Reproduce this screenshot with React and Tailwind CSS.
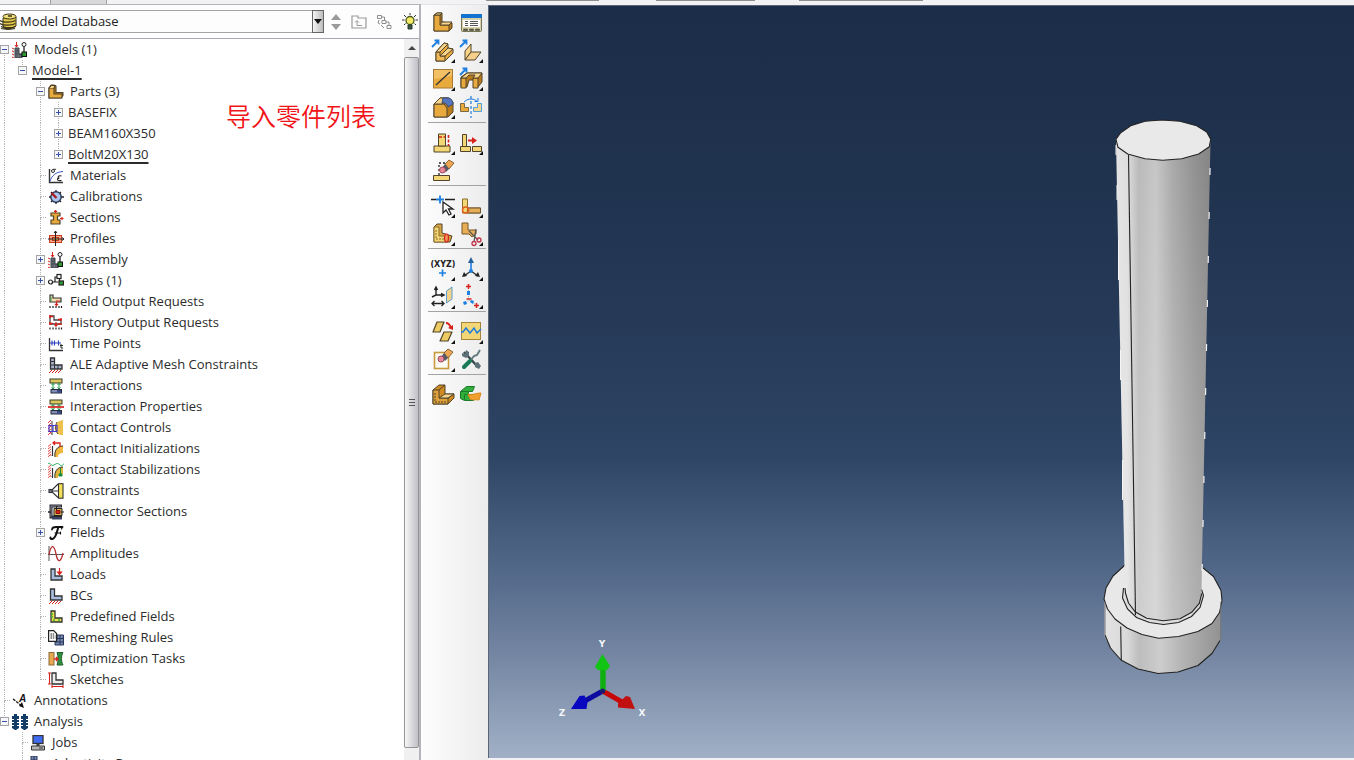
import React from "react";

const O = "#e9aa3d";
const OL = "#f8d48b";
const OD = "#b97a1c";
const K = "#51442a";
const Y = "#f3d777";
const B = "#1d7fe0";
const R = "#d8231d";

/* ---------- tree icons, 16 x 16 ---------- */

const L = "M3 2h4v7h7v4H3z";

const assembly = (
  <g>
    <path d="M4.500 0v5M3 3l1.500 2L6 3" fill="none" stroke={R} />
    <path d="M3 6h4v6h3v4H3z" fill="#6f7780" stroke="#3c4248" />
    <path d="M5 6v10M3 9h4M3 12h7M8 12v4" stroke="#3c4248" strokeWidth=".7" />
    <path d="M0 6l2 1M0 9l2 1M0 12l2 1M0 15l2 1" stroke={R} />
    <circle cx="12" cy="2.500" r="2" fill="#fff" stroke="#222" />
    <path d="M12 5v5" stroke="#222" strokeWidth="1.300" />
    <rect x="10" y="10" width="4.500" height="4.500" fill="#2f9a2f" stroke="#111" />
  </g>
);

const interaction = (
  <g>
    <rect x="2" y="1" width="12" height="4" fill="#d9c862" stroke="#3b3820" />
    <path d="M5 5v6M11 5v6M3.500 7L5 5.500 6.500 7M9.500 7L11 5.500 12.500 7M3.500 9.500L5 11l1.500-1.500M9.500 9.500L11 11l1.500-1.500" stroke="#1f9a4b" fill="none" />
    <rect x="3" y="11.500" width="10.500" height="3.500" fill="#7d8bb5" stroke="#262b3a" />
    <path d="M9 12h4v3H9z" fill="#3c4a86" />
  </g>
);

const wall = <path d="M0 3l3-3M0 6l3-3M0 9l3-3M0 12l3-3M0 15l3-3M3 14v-1" stroke={R} strokeWidth=".9" />;

const icons = {
  assembly,
  parts: (
    <g stroke={K} strokeWidth="1.100" strokeLinejoin="round">
      <path d="M1 4v10h12l2-2.500V8.500H8V2L6 1H3z" fill={OD} />
      <path d="M1 4h5v6h8v4H1z" fill={O} />
      <path d="M1 4l2-2.500h4L6 4" fill={OL} />
    </g>
  ),
  materials: (
    <g fill="none">
      <path d="M1.500 1v13.500H15" stroke="#333" strokeWidth="1.400" />
      <path d="M2 13C4 8 7 4 15 3.500" stroke="#3558c8" />
      <circle cx="5" cy="3" r="1.500" stroke="#333" />
      <path d="M5 1.300h3" stroke="#333" />
      <path d="M13.500 8c-4-1-4 2-2 2-3 0-3 3.500 2 2.500" stroke="#222" strokeWidth="1.200" />
    </g>
  ),
  calibrations: (
    <g stroke="#222">
      <path d="M8 1v2M8 13v2M1 8h2M13 8h3M3 3l1.500 1.500M13 3l-1.500 1.500M3 13l1.500-1.500M13 13l-1.500-1.500" strokeWidth="1.300" />
      <circle cx="8" cy="8" r="5.200" fill="#a9c4ee" stroke="#27364f" strokeWidth="1.400" />
      <path d="M3.500 4l5 5" stroke="#b01818" strokeWidth="2.300" />
    </g>
  ),
  sections: (
    <g>
      <path d="M3 3h9v3H9.500v4H12v4H3v-4h2.500V6H3z" fill={O} stroke={K} strokeWidth="1.200" />
      <path d="M7.500 0v3M6 1.300h3M12 8.500h3.500M14 7v3" stroke={R} strokeWidth="1.200" />
    </g>
  ),
  profiles: (
    <g>
      <rect x="1.500" y="4.500" width="12" height="7" fill="#f7a888" stroke="#d04020" />
      <rect x="4.500" y="6.500" width="6" height="3" fill="#f8c060" stroke="#c03818" />
      <path d="M7.500 0v15M0 8h16M6 2l1.500-2L9 2M14 6.500L16 8l-2 1.500" fill="none" stroke="#222" />
    </g>
  ),
  steps: (
    <g stroke="#222" strokeWidth="1.200" fill="none">
      <circle cx="2.500" cy="9" r="2" />
      <path d="M5 9h5M7 9V4h2" />
      <rect x="9" y="1.500" width="4" height="4" fill="#fff" />
      <path d="M11.500 5.500V8" />
      <rect x="11" y="8" width="4.500" height="4" fill="#2f9a2f" />
    </g>
  ),
  field: (
    <g>
      <path d="M2 1h3v3h8v4H2z" fill="#f4dcae" stroke="#333" strokeWidth="1.200" />
      <path d="M3 3v4" stroke="#2da84a" />
      <path d="M8 7h4M8.500 8v3M7 10l1.500 1.500L10 10" stroke={R} fill="none" strokeWidth="1.200" />
      <path d="M2 12v3M5 12v3M8 12v3M11 12v3M13.500 12v3" stroke="#222" strokeDasharray="2 1" strokeWidth="1.200" />
    </g>
  ),
  history: (
    <g>
      <path d="M2 1h4v4h7v4H2z" fill="#fff" stroke="#444" strokeWidth="1.300" />
      <path d="M1 1.500h4M1 8.500h4M10 4.500h4M10 9h4M2 0v3M2 7v3M13 3v3M8 7v4M6.500 9.500L8 11l1.500-1.500" stroke={R} fill="none" strokeWidth="1.300" />
      <path d="M2 12.500v3M5 12.500v3M8 12.500v3M11 12.500v3M13.500 12.500v3" stroke="#222" strokeDasharray="2 1" strokeWidth="1.200" />
    </g>
  ),
  time: (
    <g fill="none">
      <path d="M1.500 2v12.500H15" stroke="#333" strokeWidth="1.300" />
      <path d="M2 7h11M4 4.500v5M6.500 4.500v5M10.500 4.500v5" stroke="#2c3fbf" strokeWidth="1.100" />
      <path d="M13 8v4h2M12 9.500h3" stroke="#222" />
    </g>
  ),
  ale: (
    <g>
      <path d="M2.500 1h4v7H14v4H2.500z" fill="#a9b4cc" stroke="#333" strokeWidth="1.300" />
      <path d="M2.500 4.500h4M6.500 8v4M2.500 8h4M10 8v4" stroke="#333" />
      <path d="M1 16l3-3M4 16l3-3M7 16l3-3M10 16l3-3" stroke={R} />
    </g>
  ),
  interaction,
  interactionProps: (
    <g>
      {interaction}
      <path d="M0 8h16" stroke={R} strokeWidth="1.700" />
    </g>
  ),
  contactControls: (
    <g>
      {wall}
      <path d="M4 1v14" stroke="#333" />
      <path d="M15 0c-6 1-9 5-8 9s3 6 8 6z" fill="#eec04c" />
      <path d="M9 2c-2 4-2 8 1 12" stroke={K} fill="none" />
      <path d="M1 5.500h8v6H1zM5 5v7" fill="none" stroke="#4338d0" strokeWidth="1.200" />
    </g>
  ),
  contactInit: (
    <g>
      <g transform="translate(0 3) scale(1 .85)">{wall}</g>
      <path d="M4.500 5v10" stroke="#333" strokeWidth="1.200" />
      <path d="M15 5c-6 0-9 5-8 11h3c0-3 2-4 5-4z" fill="#eeb83c" />
      <path d="M15 5c-6 0-9 5-8 11" stroke="#333" fill="none" />
      <path d="M12 6V2H5M7 0L5 2l2 2" stroke={R} fill="none" strokeWidth="1.300" />
    </g>
  ),
  contactStab: (
    <g>
      <g transform="translate(0 3) scale(1 .85)">{wall}</g>
      <path d="M4.500 6v10" stroke="#333" strokeWidth="1.200" />
      <path d="M15 5c-6 0-9 5-8 11h3c0-3 2-4 5-4z" fill="#e0b43c" />
      <path d="M15 5c-6 0-9 5-8 11" stroke="#333" fill="none" />
      <path d="M0 2c2-3 3 3 6 1s4-2 6 0 3-1 4-1" stroke="#1fae5c" fill="none" />
      <path d="M12.500 6v8M11 12h3v2h-3z" stroke="#178a3c" fill="#178a3c" />
    </g>
  ),
  constraints: (
    <g stroke="#333" strokeWidth="1.100">
      <rect x="10.500" y=".700" width="4.500" height="14.500" fill="#f2df58" />
      <path d="M10 1L3 8l7 6.500M3 8h7" fill="none" />
      <rect x="1" y="6.500" width="3" height="3" fill="#6f7d9a" />
    </g>
  ),
  connector: (
    <g>
      <path d="M14 2H3v11h11" fill="none" stroke="#2a2a32" strokeWidth="3" />
      <path d="M13 2H3v11" fill="none" stroke="#8a8a96" />
      <path d="M0 8h3" stroke="#222" strokeWidth="1.500" />
      <path d="M6 4.500h8v7H6z" fill="#d9b452" stroke="#222" />
      <path d="M8 6.500h4v3H8z" fill={R} stroke="#8a1010" />
      <path d="M13 8h3M8.500 2v4" stroke="#222" />
      <path d="M4 13h10v2.500H4z" fill="#3a4060" />
    </g>
  ),
  amplitudes: (
    <g fill="none">
      <path d="M1 0v15M0 8.500h16" stroke="#555" />
      <path d="M1 9C3-2 6-2 8 8s5 8 7-1" stroke="#b33030" strokeWidth="1.300" />
    </g>
  ),
  loads: (
    <g>
      <path d={L} fill="#a8bde0" stroke="#333" strokeWidth="1.300" />
      <path d="M11.500 1v6M9.500 5l2 2.500 2-2.500z" stroke={R} fill={R} strokeWidth="1.200" />
    </g>
  ),
  bcs: (
    <g>
      <path d="M2.500 1h4v7H14v4H2.500z" fill="#a8bde0" stroke="#333" strokeWidth="1.300" />
      <path d="M1 16l3-3M4 16l3-3M7 16l3-3M10 16l3-3" stroke={R} />
    </g>
  ),
  predefined: (
    <g>
      <path d={L} fill="#e8e04c" stroke="#333" strokeWidth="1.300" />
      <path d="M4 4v5M5 11h2M10 11h2" stroke="#3fb03f" strokeWidth="1.500" strokeDasharray="2 1" />
    </g>
  ),
  remeshing: (
    <g>
      <path d="M9 5h6.500v10H7v-5h2z" fill="#7388b4" stroke="#2a3554" />
      <path d="M12 5v10M9 8.500h6M7 12h8" stroke="#2a3554" />
      <path d="M.6.600h5l3 3v7.800h-8z" fill="#fff" stroke="#222" strokeWidth="1.200" />
      <path d="M2.500 4h4M2.500 6h5M2.500 8h5" stroke="#222" strokeDasharray="1.500 .7" />
    </g>
  ),
  optimization: (
    <g>
      <rect x="1" y="1.500" width="5" height="12.500" fill="#e8a850" stroke="#8a6a3a" />
      <path d="M9 1.500h6c-2 3-2 9 0 12.500H9c1.500-4 1.500-8 0-12.500z" fill="#2f8f3f" stroke="#1f5f2a" />
      <path d="M6 8h3.500M8 6l2 2-2 2" stroke={R} fill="none" strokeWidth="1.300" />
    </g>
  ),
  sketches: (
    <g>
      <path d="M4 1h4v7h7v4H4z" fill="#eee" stroke="#333" strokeWidth="1.300" />
      <path d="M1.500 1v11M0 1h3M0 12h3M4 14.500h11M4 13v3M15 13v3" stroke={R} strokeWidth="1.100" />
    </g>
  ),
  fields: (
    <g fill="none" stroke="#111" strokeLinecap="round">
      <path d="M4 4.500C4 2 6 2 8 2h6.500" strokeWidth="1.800" />
      <path d="M10.500 2C9 5 8.500 13 4.500 14c-1.500.4-2.500-.5-2-1.500" strokeWidth="2" />
      <path d="M7 8h5M12.500 7v2M14.500 2l-1 2" strokeWidth="1.200" />
    </g>
  ),
  annotations: (
    <g>
      <path d="M1 6l9 7" stroke="#111" strokeWidth="1.300" strokeDasharray="3 1" />
      <path d="M12 15l-5-2 3-4z" fill="#111" />
      <text x="7" y="9" fontSize="10" fontWeight="bold" fontStyle="italic" fontFamily="Liberation Sans, sans-serif" fill="#111">A</text>
    </g>
  ),
  analysis: (
    <g fill="#123c66">
      {[0, 9].map((x) => (
        <path key={x} transform={`translate(${x} 0)`} d="M2 0h3v2h2v3H5v1h2v2H5v1h2v2H5v1h2v2L4 16H3l-3-2v-2h2v-1H0V9h2V8H0V6h2V5H0V2h2z" />
      ))}
    </g>
  ),
  jobs: (
    <g stroke="#333">
      <rect x="3" y="0.500" width="10" height="8" fill="#3f6cf0" strokeWidth="1.300" />
      <path d="M7 9h2v2H7z" fill="#666" />
      <path d="M1.500 11h13v4h-13z" fill="#b8b8b8" />
      <path d="M9 13h4" />
    </g>
  ),
  adaptivity: (
    <g stroke="#2a3554">
      <path d="M1 0h6v10H1z" fill="#7388b4" />
      <path d="M4 0v10M1 4h6" />
    </g>
  ),
};

/* ---------- tree data ---------- */

const tree = [
  {
    label: "Models (1)", icon: "assembly", open: true, children: [
      {
        label: "Model-1", open: true, marked: true, children: [
          {
            label: "Parts (3)", icon: "parts", open: true, children: [
              { label: "BASEFIX", open: false },
              { label: "BEAM160X350", open: false },
              { label: "BoltM20X130", open: false, marked: true },
            ],
          },
          { label: "Materials", icon: "materials" },
          { label: "Calibrations", icon: "calibrations" },
          { label: "Sections", icon: "sections" },
          { label: "Profiles", icon: "profiles" },
          { label: "Assembly", icon: "assembly", open: false },
          { label: "Steps (1)", icon: "steps", open: false },
          { label: "Field Output Requests", icon: "field" },
          { label: "History Output Requests", icon: "history" },
          { label: "Time Points", icon: "time" },
          { label: "ALE Adaptive Mesh Constraints", icon: "ale" },
          { label: "Interactions", icon: "interaction" },
          { label: "Interaction Properties", icon: "interactionProps" },
          { label: "Contact Controls", icon: "contactControls" },
          { label: "Contact Initializations", icon: "contactInit" },
          { label: "Contact Stabilizations", icon: "contactStab" },
          { label: "Constraints", icon: "constraints" },
          { label: "Connector Sections", icon: "connector" },
          { label: "Fields", icon: "fields", open: false },
          { label: "Amplitudes", icon: "amplitudes" },
          { label: "Loads", icon: "loads" },
          { label: "BCs", icon: "bcs" },
          { label: "Predefined Fields", icon: "predefined" },
          { label: "Remeshing Rules", icon: "remeshing" },
          { label: "Optimization Tasks", icon: "optimization" },
          { label: "Sketches", icon: "sketches" },
        ],
      },
    ],
  },
  { label: "Annotations", icon: "annotations" },
  {
    label: "Analysis", icon: "analysis", open: true, children: [
      { label: "Jobs", icon: "jobs" },
      { label: "Adaptivity Processes", icon: "adaptivity" },
    ],
  },
];

function TreeNode({ node, guides, first, last }) {
  const expandable = node.open !== undefined;
  return (
    <li role="treeitem" aria-expanded={expandable ? node.open : undefined}>
      <div className="flex h-[21px] items-center whitespace-nowrap">
        {guides.map((on, i) => (
          <span key={i} className="h-full w-[18px] shrink-0 pl-1">
            {on && <span className="block h-full border-l border-dotted border-[#b4b4b4]" />}
          </span>
        ))}
        <span className="relative flex h-full w-[9px] shrink-0 flex-col pl-1">
          <span className={first ? "flex-1" : "flex-1 border-l border-dotted border-[#b4b4b4]"} />
          <span className={last ? "flex-1" : "flex-1 border-l border-dotted border-[#b4b4b4]"} />
          {expandable ? (
            <button
              type="button"
              aria-label={`${node.open ? "Collapse" : "Expand"} ${node.label}`}
              className="absolute left-0 top-[6px] flex size-[9px] items-center justify-center border border-[#a4a4a4] bg-[#f6f7fa]"
            >
              <svg viewBox="0 0 7 7" className="size-[7px]" stroke="#3a4fa8">
                <path d={node.open ? "M1 3.500h5" : "M1 3.500h5M3.500 1v5"} />
              </svg>
            </button>
          ) : (
            <span className="absolute left-1 top-[10px] w-[6px] border-t border-dotted border-[#b4b4b4]" />
          )}
        </span>
        {node.icon && (
          <svg viewBox="0 0 16 16" className="ml-[3px] mr-px size-4 shrink-0" aria-hidden="true">
            {icons[node.icon]}
          </svg>
        )}
        <span className={node.marked ? "ml-[5px] underline decoration-2 underline-offset-[3px]" : "ml-[5px]"}>{node.label}</span>
      </div>
      {node.children && (
        <ul role="group">
          {node.children.map((c, i) => (
            <TreeNode key={c.label} node={c} guides={[...guides, !last]} last={i === node.children.length - 1} />
          ))}
        </ul>
      )}
    </li>
  );
}

/* ---------- toolbar icons, 28 x 28 ---------- */

const more = <path d="M26 22v4h-4z" fill="#111" />;
const arrowUp = <path d="M3 10l6-6M5.500 3.500H9.500V7.500" stroke={B} strokeWidth="1.800" fill="none" />;

const groups = [
  [
    ["Create Part", false, (
      <g stroke={K} strokeLinejoin="round">
        <path d="M5 6l3-2h5v9l10 1v5l-3 3H5z" fill={OD} />
        <path d="M5 6h6v10h9v6H5z" fill={O} />
        <path d="M5 6l3-2h5l-2 2zM11 16l2-3h10l-3 3z" fill={OL} />
      </g>
    )],
    ["Part Manager", false, (
      <g>
        <rect x="4.500" y="5.500" width="20" height="17" rx="1" fill="#d8d2ac" stroke="#77745c" />
        <path d="M4 5h21v4H4z" fill="#1173cf" />
        <path d="M6 11h17v7H6z" fill="#fff" />
        <path d="M8 12.500h3M8 14.500h3M8 16.500h3M13 12.500h8M13 14.500h8M13 16.500h8" stroke="#555" />
        <path d="M6.500 20h4v1.500h-4zM12.500 20h4v1.500h-4zM18.500 20h4v1.500h-4z" fill="#55523c" stroke="#55523c" strokeWidth=".6" />
      </g>
    )],
    ["Create Solid: Extrude", true, (
      <g>
        <g stroke={K} strokeLinejoin="round">
          <path d="M7 15l8-9 4 1v4l5 1v4l-8 8H7z" fill={O} />
          <path d="M7 15h4v4h5v5H7z" fill="#f0b854" />
          <path d="M7 15l8-9 4 1-8 8z" fill={OL} />
          <path d="M11 19l8-8 5 1-8 7z" fill={OL} />
        </g>
        {arrowUp}
      </g>
    )],
    ["Create Shell: Extrude", true, (
      <g>
        <path d="M8 14l6-7v8l-6 8z" fill={OL} stroke={K} />
        <path d="M14 15h10l-6 8H8z" fill="#f7cf8d" stroke={K} />
        {arrowUp}
      </g>
    )],
    ["Create Wire", true, (
      <g>
        <rect x="4.500" y="4.500" width="19" height="18.500" fill={O} stroke="#a57a34" />
        <path d="M5 5h18v6L5 14z" fill="#f4c066" />
        <path d="M7 20L21 7" stroke="#333" strokeWidth="1.300" />
      </g>
    )],
    ["Create Cut: Extrude", true, (
      <g>
        <g stroke={K} strokeLinejoin="round">
          <path d="M4 12l6-4h15v9l-4 5h-4v-7h-5l-2 7H4z" fill={OD} />
          <path d="M4 13h5v10H4zM16 13h5v10h-5z" fill={O} />
          <path d="M4 13l6-5h15l-4 5h-5l2-3h-6l-3 3z" fill={OL} />
        </g>
        {arrowUp}
      </g>
    )],
    ["Create Round or Fillet", true, (
      <g strokeLinejoin="round">
        <path d="M5 11l6-6h9l4 4v10l-5 5H5z" fill={OD} stroke={K} />
        <path d="M5 11h10l3 4v9H5z" fill={O} stroke={K} />
        <path d="M5 11l6-6h8l-6 6z" fill={OL} stroke={K} />
        <path d="M14 5h6c3 1 4 4 4 6l-5 3c0-2-3-5-6-4z" fill="#5577c0" stroke="#3d4c74" />
      </g>
    )],
    ["Create Mirror", false, (
      <g>
        <path d="M3.500 10.500h4v4h4v4h-8z" fill={O} stroke="#7a6a44" />
        <path d="M24.500 10.500h-4v4h-4v4h8z" fill={OL} stroke="#4fa0dc" />
        <path d="M14 3v22" stroke={B} strokeDasharray="3 2" strokeWidth="1.200" />
        <path d="M7 9c4-4 10-4 14 0M17.500 8.500h3.500V5" fill="none" stroke={B} />
      </g>
    )],
  ],
  [
    ["Partition Edge", true, (
      <g>
        <path d="M5 17h16v6H5z" fill={Y} stroke={K} />
        <path d="M9.500 5h7v12h-7z" fill={Y} stroke={K} />
        <path d="M10 8h6M19.500 6v11" stroke={R} strokeWidth="1.600" strokeDasharray="3 1.500" />
      </g>
    )],
    ["Partition Face", true, (
      <g>
        <path d="M3.500 17.500h10v5h-10zM15.500 17.500h9v5h-9zM5.500 5.500h4v12h-4z" fill={Y} stroke={K} />
        <path d="M11 11.500h6" stroke={R} strokeWidth="2" />
        <path d="M15 8l5 3.500-5 3.500z" fill={R} />
      </g>
    )],
    ["Remove Feature", false, (
      <g>
        <path d="M4.500 18.500h16v5h-16z" fill={Y} stroke={K} />
        <path d="M10 18V6h7" fill="none" stroke="#222" strokeWidth="1.300" strokeDasharray="2 2" />
        <path d="M16 7l4-4 5 3-5 6z" fill="#efa653" stroke="#8a6434" />
        <path d="M13 11l3-4 4 5-3 3z" fill="#555a66" />
        <circle cx="13.500" cy="13" r="3" fill="#e88a9c" stroke="#9a4a5c" />
      </g>
    )],
  ],
  [
    ["Partition Edge: Enter Parameter", true, (
      <g>
        <path d="M2 7.500h5M16 7.500h10" stroke="#222" strokeWidth="1.300" />
        <path d="M7 7.500h8M11 3.500v8" stroke={B} strokeWidth="1.800" />
        <path d="M14 10v11l3-3 3 5 2-1-2.500-5H24z" fill="#fff" stroke="#222" strokeWidth="1.300" />
      </g>
    )],
    ["Partition Face: Sketch", true, (
      <g>
        <path d="M5.500 7h5v9h13v5h-18z" fill={Y} stroke="#8a6c2c" />
        <path d="M11 16h12.500v5H10z" fill="#e6ad55" stroke="#6b5430" />
        <circle cx="8.500" cy="18" r="3" fill="none" stroke="#e2601c" strokeWidth="1.500" />
      </g>
    )],
    ["Partition Cell", true, (
      <g>
        <path d="M5 7l3-3h5v9l10 3-2 6H5z" fill="#d6a744" stroke={K} />
        <path d="M5 7h5v9h8v6H5z" fill={Y} stroke="#8c6c2c" />
        <ellipse cx="17.500" cy="18" rx="2" ry="4" fill="#ee9257" stroke={R} strokeWidth="1.200" />
        <path d="M7 10v9h8" fill="none" stroke="#8c6c2c" strokeDasharray="2 1" />
      </g>
    )],
    ["Partition Cell: Cut", true, (
      <g>
        <path d="M5 3h6v7h8v4l-4 3-3-3H5z" fill="#e6ad55" stroke="#77572a" />
        <path d="M12 11l9 9M19 9l-2 13" stroke="#555" strokeWidth="1.300" />
        <circle cx="22" cy="20" r="2" fill="none" stroke="#c0314a" strokeWidth="1.300" />
        <circle cx="17" cy="23.500" r="2" fill="none" stroke="#c0314a" strokeWidth="1.300" />
      </g>
    )],
  ],
  [
    ["Create Datum Point", true, (
      <g>
        <text x="14" y="12" textAnchor="middle" fontSize="8" fontWeight="bold" fontFamily="DejaVu Sans, sans-serif" fill="#222">(XYZ)</text>
        <path d="M10 18h7M13.500 14.500v7" stroke={B} strokeWidth="1.700" />
      </g>
    )],
    ["Create Datum Axis", true, (
      <g>
        <path d="M14 4v13" stroke={B} strokeWidth="1.600" />
        <path d="M14 2l3 6h-6z" fill="#245f9e" />
        <path d="M14 16l-7 5M14 16l7 5" stroke="#333" strokeWidth="1.500" />
        <path d="M5 22l2-5 3 4zM23 22l-2-5-3 4z" fill="#222" />
        <circle cx="14" cy="16" r="2" fill={B} />
      </g>
    )],
    ["Create Datum Plane", true, (
      <g>
        <path d="M7 5v7l-4 2M7 12h7M5.500 7L7 4l1.500 3M12 10.500l3 1.500-3 1.500" fill="none" stroke="#222" strokeWidth="1.400" />
        <path d="M3 20.500h12M5.500 18L3 20.500 5.500 23M12.500 18l2.500 2.500-2.500 2.500" fill="none" stroke="#222" strokeWidth="1.300" />
        <path d="M17.500 8L23 4v12l-5.500 4z" fill="#f3d38b" stroke="#5a9dd2" />
      </g>
    )],
    ["Create Datum Csys", true, (
      <g>
        <path d="M11.500 17l-4 4M11.500 17l8 5M11.500 4v12" stroke="#9bb" strokeDasharray="1.500 1.500" />
        <path d="M9 3.500h5M11.500 1v5M17 22.500h5M19.500 20v5M9.500 16h5" stroke={R} strokeWidth="1.500" />
        <path d="M10 8h3v4h-3zM6 19l3-1 1 3-3 1zM14 17l3 1-1 3-3-2z" fill={B} />
      </g>
    )],
  ],
  [
    ["Edit Geometry", true, (
      <g strokeLinejoin="round">
        <path d="M8 4h7l-4 10H4zM15 14h8l-4 9h-8z" fill="#eccb62" stroke={K} strokeWidth="1.200" />
        <path d="M17 5c3 0 4 2 5 5" stroke={R} fill="none" strokeWidth="2" />
        <path d="M24 7v5l-5-2z" fill={R} />
      </g>
    )],
    ["Repair Small Faces", true, (
      <g>
        <rect x="4.500" y="4.500" width="19" height="17" fill={Y} stroke="#a8843a" />
        <path d="M4 14h2l3-4 4 5 4-5 3 5 4-4" fill="none" stroke={B} strokeWidth="1.500" />
      </g>
    )],
    ["Delete Faces", true, (
      <g>
        <rect x="5.500" y="6.500" width="14" height="16" fill="#fcfcf4" stroke="#c79a3c" strokeWidth="1.600" />
        <path d="M15 7l4-4 5 3-5 6z" fill="#efa653" stroke="#8a6434" />
        <path d="M12 11l3-4 4 5-3 3z" fill="#555a66" />
        <circle cx="12" cy="13" r="3" fill="#e88a9c" stroke="#9a4a5c" />
      </g>
    )],
    ["Geometry Tools", false, (
      <g>
        <path d="M7 6l14 15" stroke="#3a4a50" strokeWidth="2.500" />
        <path d="M5 7l3 1 1-4 3 2v4l-3 2-4-2zM18 17l3-1 3 4-2 3-4-2z" fill="#5d7178" />
        <path d="M23 4l-3 5-3 1-4 5" stroke="#657a80" strokeWidth="2" fill="none" />
        <path d="M13 15l-6 6" stroke="#187a56" strokeWidth="4" strokeLinecap="round" />
      </g>
    )],
  ],
  [
    ["Part Display", false, (
      <g stroke={K} strokeLinejoin="round">
        <path d="M4 9l6-5h6v9h9v4l-6 6H4z" fill="#d08a22" />
        <path d="M4 9h6v8h9v6H4z" fill="#e0a03a" />
        <path d="M10 9l6-5M19 17l6-4" fill="none" />
        <path d="M10 17l6-4h9l-6 4z" fill={OL} />
        <path d="M6 12v9h11" fill="none" strokeDasharray="2 1" />
      </g>
    )],
    ["Mesh Display", false, (
      <g strokeLinejoin="round">
        <path d="M3.500 10.500l6-5h8l-2 5h-4v3h5v6h-9l-4-2z" fill="#2fae3c" stroke="#1b7a28" />
        <path d="M4 10.500h7M7.500 13.500h4M7.500 14v5" stroke="#1b7a28" fill="none" />
        <path d="M11 13c4 2 6-1 13-1l-2 7c-4-1-6 1-9-1z" fill="#f0a02c" stroke="#d88a1c" />
      </g>
    )],
  ],
];

function Toolbar() {
  return (
    <div role="toolbar" aria-label="Part toolbox" className="flex w-[67px] shrink-0 flex-col bg-linear-to-r from-[#fdfdfd] to-[#ececec] border-t border-[#e4e4e4] pl-[7px] pr-[2px]">
      {groups.map((g, i) => (
        <div
          key={i}
          className={
            "grid grid-cols-[28px_28px] px-px " +
            (i === 0 ? "pt-1 pb-px " : "pt-[6px] ") +
            (i < groups.length - 1 ? "border-b border-[#a3a3a3]" : "")
          }
        >
          {g.map(([name, fly, art]) => (
            <button key={name} type="button" aria-label={name} className="size-7">
              <svg viewBox="0 0 28 28" className="size-7">
                {art}
                {fly && more}
              </svg>
            </button>
          ))}
        </div>
      ))}
    </div>
  );
}

/* ---------- model header ---------- */

function Header() {
  return (
    <div className="flex h-[34px] shrink-0 items-center border-b border-[#a9a9b2] bg-[#fdfdfd]">
      <div className="relative h-[23px] w-[324px] border-y border-[#a4a4a4]">
        <svg viewBox="0 0 17 17" className="pointer-events-none absolute left-0 top-[2px] size-[17px]" aria-hidden="true">
          <g stroke="#3c3518">
            <path d="M3 5v8c2 2.500 11 2.500 13 0V4z" fill="#e4c84a" />
            <path d="M0 7.500c3 2.500 12 2 15.500 0M0 10.500c3 2.500 12 2 15.500 0M1 13.500c3 2 11 2 14.500 0M1 15.500c3 1 11 1 14 0" fill="none" strokeWidth="1.300" />
            <ellipse cx="9.500" cy="3.500" rx="6.500" ry="2.500" fill="#efe07a" />
            <path d="M8 3h4" strokeWidth="1.500" />
          </g>
        </svg>
        <select aria-label="Model tree source" className="block h-full w-full appearance-none bg-transparent pl-5 text-[#222]">
          <option>Model Database</option>
        </select>
        <span className="pointer-events-none absolute -top-px right-0 flex h-[23px] w-3 items-center justify-center border border-[#666] bg-linear-to-r from-[#f4f4f4] to-[#bdbdbd]">
          <svg viewBox="0 0 8 5" className="h-[5px] w-2"><path d="M0 0h8L4 5z" fill="#111" /></svg>
        </span>
      </div>
      <div className="flex flex-1 items-center justify-between pl-[7px] pr-px">
        <div className="flex flex-col gap-1">
          <button type="button" aria-label="Previous" className="block"><svg viewBox="0 0 10 6" className="h-[6px] w-[10px]"><path d="M5 0l5 6H0z" fill="#9b9b9b" /></svg></button>
          <button type="button" aria-label="Next" className="block"><svg viewBox="0 0 10 6" className="h-[6px] w-[10px]"><path d="M5 6l5-6H0z" fill="#9b9b9b" /></svg></button>
        </div>
        <button type="button" aria-label="Up one level">
          <svg viewBox="0 0 16 16" className="size-4" fill="none" stroke="#9a9a9a">
            <path d="M1 3.500V2h6v2h8v10H1z" strokeWidth="1.200" />
            <path d="M6 11.500h5M6 11.500V7M4 8.500l2-2 2 2" />
          </svg>
        </button>
        <button type="button" aria-label="Set as root">
          <svg viewBox="0 0 16 16" className="size-4" fill="none" stroke="#8f8f8f">
            <path d="M1.500 1.500h4v3h-4zM6 6.500h4v3H6zM11 11.500h4v3h-4zM5.500 3h3v3M10 8h3v3M3 6l-1 3 2 1M5 11l3 3" />
          </svg>
        </button>
        <button type="button" aria-label="Tips">
          <svg viewBox="0 0 16 18" className="h-[18px] w-4">
            <path d="M8 0v2M2 2l2 2M14 2l-2 2M0 7h2.500M13.500 7H16M2 12l1.500-1.500M14 12l-1.500-1.500" stroke="#333" />
            <circle cx="8" cy="7.500" r="4" fill="#f4ea66" stroke="#4a5a20" strokeWidth="1.300" />
            <path d="M6 12h4v4H6z" fill="#3b5544" stroke="#26382c" />
          </svg>
        </button>
      </div>
    </div>
  );
}

function ScrollBar() {
  return (
    <div className="flex w-[15px] shrink-0 flex-col bg-[#f0f0f0] pb-3">
      <button type="button" aria-label="Scroll up" className="flex h-[18px] items-center justify-center">
        <svg viewBox="0 0 8 4" className="h-1 w-2"><path d="M4 0l4 4H0z" fill="#444" /></svg>
      </button>
      <div className="flex flex-1 items-center justify-center rounded-[2px] border border-[#959595] bg-linear-to-r from-[#f7f7f7] to-[#bfbfc6]">
        <svg viewBox="0 0 8 9" className="h-[9px] w-2" stroke="#555"><path d="M1 1.500h6M1 4.500h6M1 7.500h6" /></svg>
      </div>
    </div>
  );
}

/* ---------- viewport drawings ---------- */

function Bolt() {
  const edge = { fill: "none", stroke: "#222", strokeWidth: 1.1, strokeLinejoin: "round" };
  return (
    <svg viewBox="1100 116 126 562" className="absolute left-[611px] top-[110px] h-[562px] w-[126px]" role="img" aria-label="BoltM20X130">
      <defs>
        <linearGradient id="shaft">
          <stop offset="0" stopColor="#e3e3e3" />
          <stop offset=".12" stopColor="#dedede" />
          <stop offset=".24" stopColor="#b9b9b9" />
          <stop offset=".42" stopColor="#c6c6c6" />
          <stop offset=".6" stopColor="#a9a9a9" />
          <stop offset=".85" stopColor="#8f8f8f" />
          <stop offset="1" stopColor="#848484" />
        </linearGradient>
        <linearGradient id="head">
          <stop offset="0" stopColor="#e3e3e3" />
          <stop offset=".2" stopColor="#d8d8d8" />
          <stop offset=".3" stopColor="#bdbdbd" />
          <stop offset=".48" stopColor="#cdcdcd" />
          <stop offset=".7" stopColor="#b0b0b0" />
          <stop offset="1" stopColor="#929292" />
        </linearGradient>
        <linearGradient id="fade" x1="0" x2="0" y1="0" y2="1">
          <stop offset="0" stopColor="#fff" stopOpacity="0" />
          <stop offset="1" stopColor="#fff" stopOpacity=".3" />
        </linearGradient>
      </defs>
      <path d="M1104.500 598v38l6 12 10.500 12 17 9 20 4.500 20-1.500 20-6.500 14-12 8.500-13V598z" fill="url(#head)" />
      <path d="M1125 565l-12 11-7 12-2 11 3.500 10 7.500 10 12 9 15 6.500 16.500 3.700 20-1.700 19.500-5 14-8 7.500-11 2.500-12-1-10-7.500-14-11-9z" fill="#e8e8e8" />
      <path d="M1125 565l-12 11-7 12-2 11 3.500 10 7.500 10 12 9 15 6.500 16.500 3.700 20-1.700 19.500-5 14-8 7.500-11 2.500-12-1-10-7.500-14-11-9M1105 635l5.500 13 10.500 12 17 9 20 4.500 20-1.500 20-6.500 14-12 8-13M1120.700 626.500l.6 33.500" {...edge} />
      <path d="M1105 602v33M1220.800 602v38" stroke="#777" strokeWidth="1" />
      <path d="M1123.500 588l-1 10 5 11 9 8.500 13 5 14 2 15-2 13-6 8.500-9 3.500-12-2-6" fill="#dcdcdc" stroke="#222" strokeWidth="1.100" />
      <path d="M1116 139.500L1125 593l3.500 10 6.500 8.700 11.700 6.600 16.600 2.400 16.700-2 11.700-6.400 7.600-9 2-8.300L1210.500 139.500z" fill="url(#shaft)" />
      <path d="M1116 139.500L1125 593l3.500 10 6.500 8.700 11.700 6.600 16.600 2.400 16.700-2 11.700-6.400 7.600-9 2-8.300L1210.500 139.500z" fill="url(#fade)" />
      <path d="M1125 588l.5 5 3 10 6.500 8.700 11.700 6.600 16.600 2.400 16.700-2 11.700-6.400 7.600-9 2.500-10" {...edge} />
      <path d="M1128.500 155l7 460" {...edge} />
      <path d="M1116 139.300l4.700-6.600 10-7 14.300-4.400 16.700-1.300 18.300 1.300 16.700 4.400 10 6.300 4 7.300-1.400 7.400-10.600 7.300-17 4.700-19 1.600-17.700-1.600-17.300-4.700-9.700-6.700z" fill="#e9e9e9" stroke="#222" strokeWidth="1.100" strokeLinejoin="round" />
      <path d="M1210.500 146L1201.700 590" stroke="#f4f4f4" strokeWidth="1.200" strokeDasharray="7 37" strokeDashoffset="-22" />
      <path d="M1116 145v10M1117 185v15M1118.500 240v40M1120.500 350v30M1122.500 460v40" stroke="#f4f4f4" strokeWidth="1" />
    </svg>
  );
}

function Triad() {
  return (
    <svg viewBox="555 636 94 84" className="absolute bottom-[38px] left-[66px] h-[84px] w-[94px]" role="img" aria-label="Coordinate axes">
      <path d="M602.700 691L583 702" stroke="#0a0aa0" strokeWidth="5" />
      <path d="M571 709l8.500-13 5-.5 3 6.500-1 7z" fill="#0808c0" />
      <path d="M602.700 691L622 702" stroke="#c80808" strokeWidth="5" />
      <path d="M635 709l-17-1.500v-4l8-7.500 4 1z" fill="#c01010" />
      <path d="M603 691V667" stroke="#0fb010" strokeWidth="5.500" />
      <path d="M602.500 654l7.500 12-3 4h-9l-3-3z" fill="#12c414" />
      <circle cx="602.700" cy="691" r="2.500" fill="#1a1a70" />
      <g fill="#f4f6fa" fontFamily="DejaVu Sans, sans-serif" fontWeight="bold" fontSize="9" textAnchor="middle">
        <text x="602" y="647">Y</text>
        <text x="642" y="716">X</text>
        <text x="562" y="716">Z</text>
      </g>
    </svg>
  );
}

export default function App() {
  return (
    <div className="relative flex h-screen flex-col overflow-hidden bg-[#f2f2f4] font-['Open_Sans','Noto_Sans_CJK_SC',sans-serif] text-[13px] text-[#2b2b2b]">
      <div className="flex h-1 shrink-0">
        <div className="ml-[50px] w-[57px] border-x border-[#a0a0a0] bg-[#d8d8da]" />
        <div className="ml-[379px] h-px w-[113px] bg-[#8e8e8e]" />
        <div className="ml-[57px] h-px w-[99px] bg-[#8e8e8e]" />
        <div className="ml-11 h-px w-[124px] bg-[#8e8e8e]" />
      </div>
      <div className="flex min-h-0 flex-1">
        <aside className="flex w-[421px] shrink-0 flex-col border-r-2 border-t border-[#b4b4bb] bg-white">
          <Header />
          <div className="flex min-h-0 flex-1">
            <ul role="tree" aria-label="Model tree" className="min-w-0 flex-1 overflow-hidden">
              {tree.map((n, i) => (
                <TreeNode key={n.label} node={n} guides={[]} first={i === 0} last={i === tree.length - 1} />
              ))}
            </ul>
            <ScrollBar />
          </div>
        </aside>
        <Toolbar />
        <main className="relative mb-[2px] mt-px min-w-0 flex-1 overflow-hidden border-l border-t border-[#5c6573] bg-[linear-gradient(to_bottom,#1b2d48_0%,#20334f_25%,#293e5d_50%,#2f4565_60%,#526889_75%,#70829f_85%,#a1b0c6_100%)]">
          <Bolt />
          <Triad />
        </main>
      </div>
      <p className="absolute left-[226px] top-[97px] font-['Noto_Sans_CJK_SC',sans-serif] text-[25px] leading-9 font-[350] text-[#f01418]">导入零件列表</p>
    </div>
  );
}
